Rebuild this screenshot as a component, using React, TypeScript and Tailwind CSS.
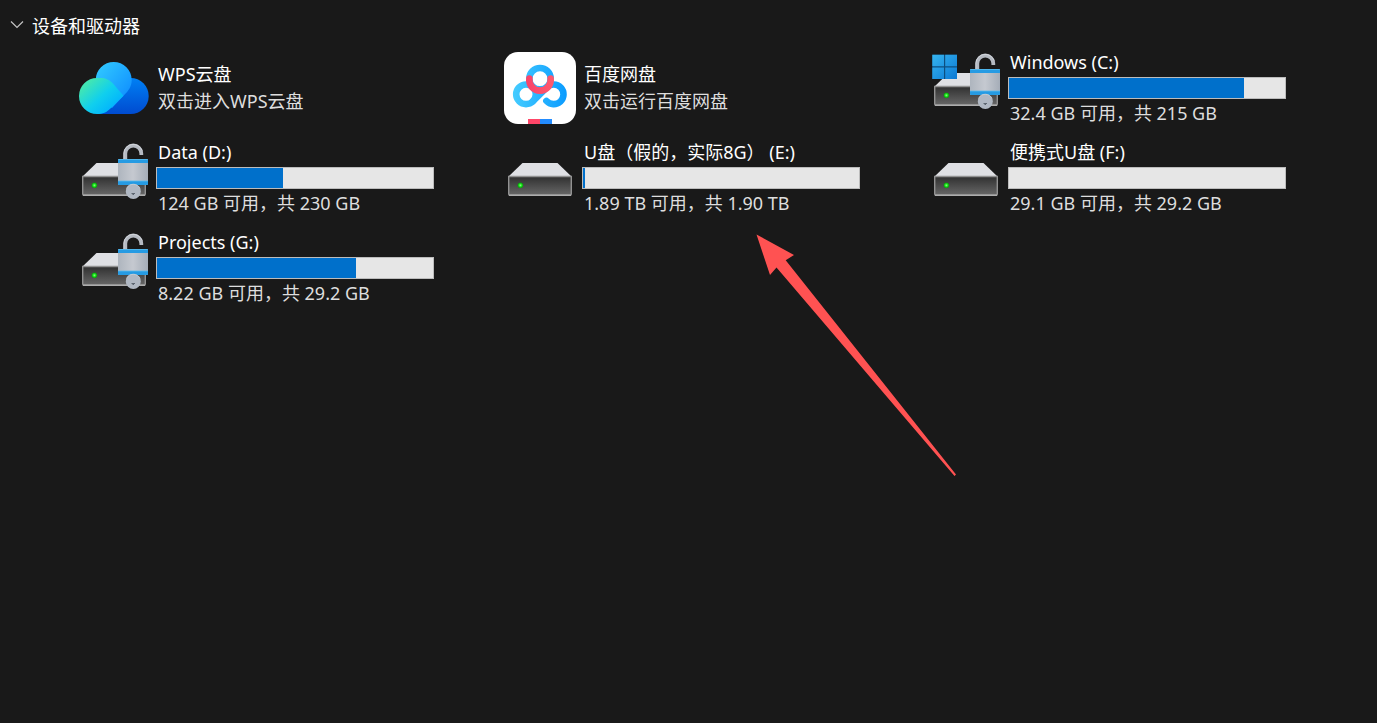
import { useState } from "react";
import type { ReactNode } from "react";

type Item = {
  name: string;
  detail: string;
  icon: ReactNode;
  used?: number;
};

function WpsCloudIcon() {
  return (
    <svg viewBox="0 0 72 72" className="size-18 shrink-0" aria-hidden="true">
      <defs>
        <linearGradient id="wps-base" x1="0" y1="0" x2="0" y2="1">
          <stop offset="0" stopColor="#0080f4" />
          <stop offset="1" stopColor="#004bd0" />
        </linearGradient>
        <linearGradient id="wps-top" x1="0" y1="0" x2="1" y2="1">
          <stop offset="0.1" stopColor="#2fc6ff" />
          <stop offset="1" stopColor="#0a84ff" />
        </linearGradient>
        <linearGradient id="wps-left" x1="0" y1="0.2" x2="0.8" y2="0.9">
          <stop offset="0.1" stopColor="#41e6b4" />
          <stop offset="0.55" stopColor="#10cfee" />
          <stop offset="1" stopColor="#00b0ff" />
        </linearGradient>
      </defs>
      <path d="M19 62 L40 36 L52.7 26 A18 18 0 0 1 52.7 62 Z" fill="url(#wps-base)" />
      <path d="M17.7 28 A18 18 0 0 1 53.7 28 C53.7 34 51 38.500 45.500 43.700 L34 56 L18 40 Z" fill="url(#wps-top)" />
      <path
        d="M19 26 H22 C28 26 31.500 28 34.500 31 L45.500 43.700 L33 56 C28.500 60.500 25 62 19 62 A18 18 0 0 1 19 26 Z"
        fill="url(#wps-left)"
      />
    </svg>
  );
}

function BaiduDiskIcon() {
  return (
    <svg viewBox="0 0 72 72" className="size-18 shrink-0" aria-hidden="true">
      <defs>
        <linearGradient id="bd-blue" gradientUnits="userSpaceOnUse" x1="9" y1="0" x2="63" y2="0">
          <stop offset="0" stopColor="#45ccff" />
          <stop offset="1" stopColor="#0a9bff" />
        </linearGradient>
        <linearGradient id="bd-red" gradientUnits="userSpaceOnUse" x1="22" y1="0" x2="50" y2="0">
          <stop offset="0" stopColor="#f8436a" />
          <stop offset="1" stopColor="#ff5a6e" />
        </linearGradient>
        <clipPath id="bd-clip">
          <rect width="72" height="72" rx="14" />
        </clipPath>
      </defs>
      <g clipPath="url(#bd-clip)">
        <rect width="72" height="72" fill="#fff" />
        <g fill="none" stroke="url(#bd-blue)" strokeWidth="6.600" strokeLinecap="round">
          <circle cx="22" cy="42.300" r="9.800" />
          <path d="M29 49.200 L42.800 35.400 A9.800 9.800 0 1 1 42.400 48.900" />
          <circle cx="36" cy="26.700" r="10.700" />
        </g>
        <path d="M25.400 26.500 A10.700 10.700 0 1 0 46.600 26.500" fill="none" stroke="url(#bd-red)" strokeWidth="6.600" strokeLinecap="round" />
        <rect x="24" y="67" width="12" height="5" fill="#ff4668" />
        <rect x="36" y="67" width="12" height="5" fill="#238cff" />
      </g>
    </svg>
  );
}

function DriveIcon({ id, locked = false, system = false }: { id: string; locked?: boolean; system?: boolean }) {
  return (
    <svg viewBox="0 0 72 72" className="size-18 shrink-0" aria-hidden="true">
      <defs>
        <linearGradient id={`${id}-body`} x1="0" y1="0" x2="0" y2="1">
          <stop offset="0" stopColor="#303030" />
          <stop offset="1" stopColor="#686868" />
        </linearGradient>
        <linearGradient id={`${id}-steel`} x1="0" y1="0" x2="1" y2="0">
          <stop offset="0" stopColor="#aeb5be" />
          <stop offset="0.500" stopColor="#c5c9d0" />
          <stop offset="1" stopColor="#a5adb8" />
        </linearGradient>
        <linearGradient id={`${id}-win`} x1="0" y1="0" x2="1" y2="1">
          <stop offset="0" stopColor="#36b5ef" />
          <stop offset="1" stopColor="#0b78d4" />
        </linearGradient>
        <radialGradient id={`${id}-led`}>
          <stop offset="0" stopColor="#8dff80" />
          <stop offset="0.550" stopColor="#16e017" />
          <stop offset="1" stopColor="#0a8f0c" />
        </radialGradient>
      </defs>
      <path d="M18.500 21 H53.500 L67.500 34.500 H4.500 Z" fill="#dfe0e4" />
      <path d="M4.700 34.500 H67.300 V52 Q67.300 53.300 66 53.300 H6 Q4.700 53.300 4.700 52 Z" fill={`url(#${id}-body)`} stroke="#929292" strokeWidth="1.400" />
      <path d="M5 53.200 H67" stroke="#adadad" strokeWidth="1.400" />
      <circle cx="16.400" cy="43.300" r="2.800" fill={`url(#${id}-led)`} />
      {system && (
        <g>
          <rect x="2.300" y="2.700" width="24.700" height="24.300" fill="#0d4f80" />
          <path
            d="M2.300 2.700 H14 V14.300 H2.300 Z M15.200 2.700 H27 V14.300 H15.200 Z M2.300 15.400 H14 V27 H2.300 Z M15.200 15.400 H27 V27 H15.200 Z"
            fill={`url(#${id}-win)`}
          />
        </g>
      )}
      {locked && (
        <g>
          <path d="M47.300 18 V11.500 A8 8 0 0 1 63.300 11.500 V13" fill="none" stroke="#b5bac2" strokeWidth="3.800" />
          <path d="M45.900 18 V11 A9.400 9.400 0 0 1 64 8.300" fill="none" stroke="#d4d7dc" strokeWidth="0.900" />
          <rect x="40" y="17" width="30" height="26" rx="1" fill={`url(#${id}-steel)`} />
          <path d="M41 17 H69 Q70 17 70 18 V21 H40 V18 Q40 17 41 17 Z M40 39 H70 V42 Q70 43 69 43 H41 Q40 43 40 42 Z" fill="#269be3" />
          <path d="M40.500 17.500 H69.500 M40 39 H70" stroke="#5bbcf0" strokeWidth="0.800" />
          <circle cx="55.300" cy="49.500" r="7.500" fill="#b0b8c3" />
          <path d="M48.500 46.500 A7.500 7.500 0 0 1 62 46.500" fill="none" stroke="#cbd0d7" strokeWidth="0.900" />
          <path d="M53.500 51 H57 V52 H56 V53 H54.500 V52 H53.500 Z" fill="#5d6671" />
        </g>
      )}
    </svg>
  );
}

const items: Item[] = [
  { name: "WPS云盘", detail: "双击进入WPS云盘", icon: <WpsCloudIcon /> },
  { name: "百度网盘", detail: "双击运行百度网盘", icon: <BaiduDiskIcon /> },
  { name: "Windows (C:)", detail: "32.4 GB 可用，共 215 GB", used: 85.1, icon: <DriveIcon id="c" locked system /> },
  { name: "Data (D:)", detail: "124 GB 可用，共 230 GB", used: 45.6, icon: <DriveIcon id="d" locked /> },
  { name: "U盘（假的，实际8G） (E:)", detail: "1.89 TB 可用，共 1.90 TB", used: 0.7, icon: <DriveIcon id="e" /> },
  { name: "便携式U盘 (F:)", detail: "29.1 GB 可用，共 29.2 GB", used: 0, icon: <DriveIcon id="f" /> },
  { name: "Projects (G:)", detail: "8.22 GB 可用，共 29.2 GB", used: 72.1, icon: <DriveIcon id="g" locked /> },
];

function Tile({ item }: { item: Item }) {
  return (
    <li className="flex h-[90px] items-center gap-1.5">
      {item.icon}
      <div className="flex w-[278px] flex-col gap-0.5">
        <h3 className="pl-0.5 whitespace-nowrap text-white">{item.name}</h3>
        {item.used !== undefined && (
          <div
            role="meter"
            aria-label={item.name}
            aria-valuemin={0}
            aria-valuemax={100}
            aria-valuenow={item.used}
            className="h-[22px] border border-[#bcbcbc] bg-[#e6e6e6]"
          >
            <div className="h-full bg-[#0070cb]" style={{ width: `${item.used}%` }} />
          </div>
        )}
        <p className="pb-0.5 pl-0.5 leading-6 whitespace-nowrap text-[#dedede]">{item.detail}</p>
      </div>
    </li>
  );
}

export default function App() {
  const [open, setOpen] = useState(true);
  return (
    <main className="relative min-h-screen bg-[#191919] font-['Noto_Sans','Noto_Sans_CJK_SC',sans-serif] text-[18px] leading-[26px]">
      <h2 className="px-2.5 pt-[13px] pb-1">
        <button type="button" aria-expanded={open} onClick={() => setOpen(!open)} className="flex items-center gap-2 text-white">
          <svg viewBox="0 0 14 14" className={open ? "size-3.5" : "size-3.5 -rotate-90"} fill="none" stroke="#c4c4c4" strokeWidth="1.200" aria-hidden="true">
            <path d="M1 2.500 L7 8.500 L13 2.500" />
          </svg>
          设备和驱动器
        </button>
      </h2>
      {open && (
        <ul className="grid grid-cols-[repeat(auto-fill,426px)] pl-[78px]">
          {items.map((item) => (
            <Tile key={item.name} item={item} />
          ))}
        </ul>
      )}
      <svg viewBox="0 0 200 242" className="pointer-events-none absolute top-[234px] left-[756px] h-[242px] w-[200px]" aria-hidden="true">
        <path d="M0.500 0.500 L38 21 L29.700 26.200 L200 240.500 L198.500 242 L20.500 33.500 L14 41 Z" fill="#ff5252" />
      </svg>
    </main>
  );
}
